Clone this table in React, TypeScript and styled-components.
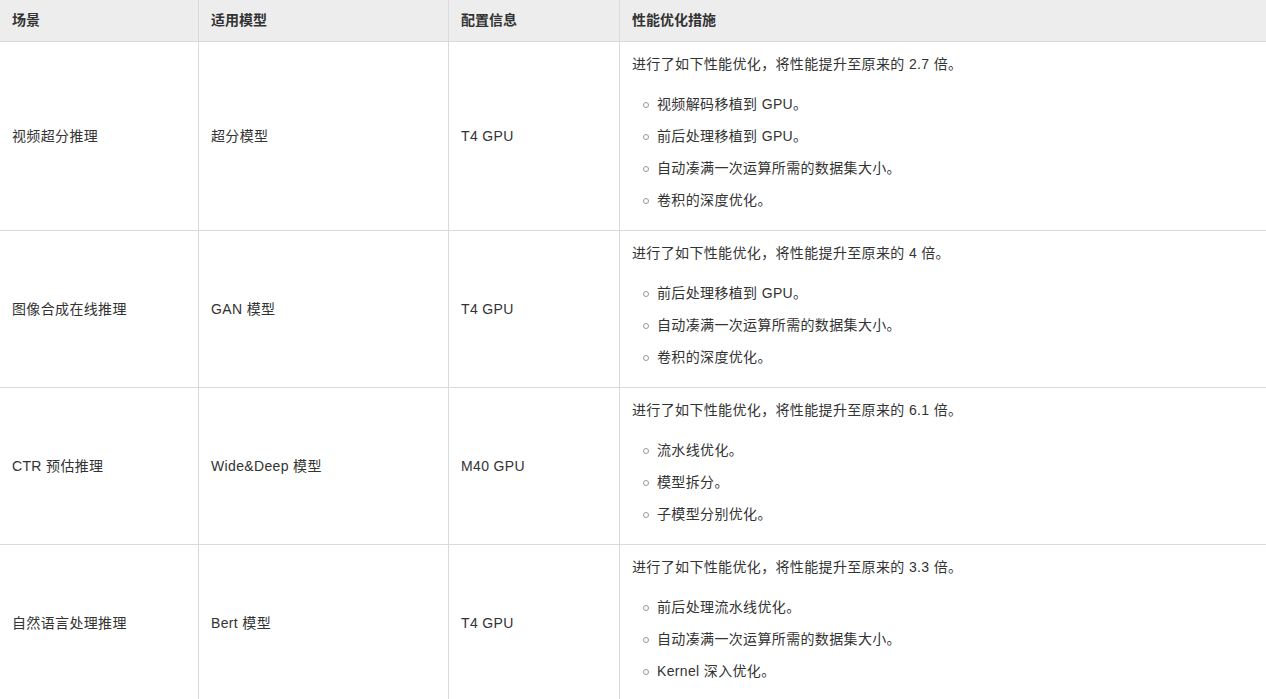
import React from "react";
import styled, { createGlobalStyle } from "styled-components";

const GlobalStyle = createGlobalStyle`
  html, body { margin: 0; padding: 0; background: #fff; }
  body {
    font-family: "Liberation Sans", Arial, "Noto Sans CJK SC", sans-serif;
    font-size: 14px;
    color: #333;
  }
`;

const Table = styled.table`
  width: 1267px;
  margin-left: -1px;
  table-layout: fixed;
  border-collapse: collapse;
  border-spacing: 0;
`;

const HeadCell = styled.th`
  background: #ededed;
  font-weight: bold;
  text-align: left;
  padding: 10px 12px;
  line-height: 21px;
  border-bottom: 1px solid #dadada;
  border-left: 1px solid #dadada;
  border-right: 1px solid #dadada;
`;

const Cell = styled.td<{ $top?: boolean }>`
  vertical-align: ${(p) => (p.$top ? "top" : "middle")};
  padding: 11px 12px 12px;
  line-height: 22px;
  letter-spacing: 0.35px;
  border-bottom: 1px solid #dadada;
  border-left: 1px solid #dadada;
  border-right: 1px solid #dadada;
`;

const Lead = styled.p`
  margin: 0;
  line-height: 22px;
`;

const List = styled.ul`
  list-style: none;
  margin: 0;
  padding: 8px 0 7px 25px;
`;

const Item = styled.li`
  position: relative;
  margin-top: 10px;
  line-height: 22px;
  &::before {
    content: "";
    position: absolute;
    left: -14px;
    top: 9px;
    width: 4px;
    height: 4px;
    border: 1px solid #999;
    border-radius: 50%;
  }
`;

type Row = {
  scene: string;
  model: string;
  config: string;
  ratio: string;
  items: string[];
};

const rows: Row[] = [
  {
    scene: "视频超分推理",
    model: "超分模型",
    config: "T4 GPU",
    ratio: "2.7",
    items: ["视频解码移植到 GPU。", "前后处理移植到 GPU。", "自动凑满一次运算所需的数据集大小。", "卷积的深度优化。"],
  },
  {
    scene: "图像合成在线推理",
    model: "GAN 模型",
    config: "T4 GPU",
    ratio: "4",
    items: ["前后处理移植到 GPU。", "自动凑满一次运算所需的数据集大小。", "卷积的深度优化。"],
  },
  {
    scene: "CTR 预估推理",
    model: "Wide&Deep 模型",
    config: "M40 GPU",
    ratio: "6.1",
    items: ["流水线优化。", "模型拆分。", "子模型分别优化。"],
  },
  {
    scene: "自然语言处理推理",
    model: "Bert 模型",
    config: "T4 GPU",
    ratio: "3.3",
    items: ["前后处理流水线优化。", "自动凑满一次运算所需的数据集大小。", "Kernel 深入优化。"],
  },
];

export default function App() {
  return (
    <>
      <GlobalStyle />
      <Table>
        <colgroup>
          <col style={{ width: 199 }} />
          <col style={{ width: 250 }} />
          <col style={{ width: 171 }} />
          <col style={{ width: 647 }} />
        </colgroup>
        <thead>
          <tr>
            <HeadCell>场景</HeadCell>
            <HeadCell>适用模型</HeadCell>
            <HeadCell>配置信息</HeadCell>
            <HeadCell>性能优化措施</HeadCell>
          </tr>
        </thead>
        <tbody>
          {rows.map((r) => (
            <tr key={r.scene}>
              <Cell>{r.scene}</Cell>
              <Cell>{r.model}</Cell>
              <Cell>{r.config}</Cell>
              <Cell $top>
                <Lead>进行了如下性能优化，将性能提升至原来的 {r.ratio} 倍。</Lead>
                <List>
                  {r.items.map((it) => (
                    <Item key={it}>{it}</Item>
                  ))}
                </List>
              </Cell>
            </tr>
          ))}
        </tbody>
      </Table>
    </>
  );
}
